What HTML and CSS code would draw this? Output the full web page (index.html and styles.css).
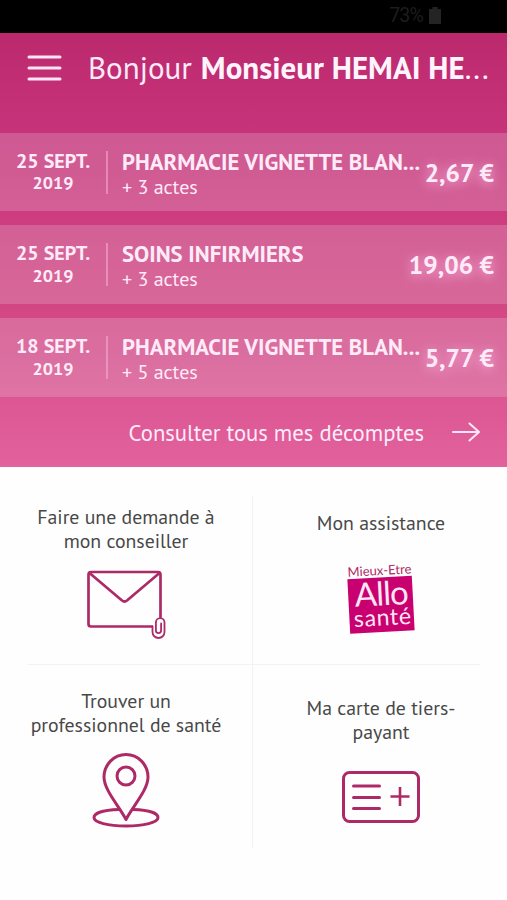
FILE: index.html
```html
<!DOCTYPE html>
<html lang="fr">
<head>
    <meta charset="UTF-8">
    <meta name="viewport" content="width=device-width, initial-scale=1.0">
    <title>Accueil</title>
    <link rel="stylesheet" href="styles.css">
</head>
<body>

<div class="status-bar">
    <span class="battery-level">73%</span>
    <svg class="battery-icon" width="12" height="17" viewBox="0 0 12 17"><path d="M3.5 0h5v2H12v15H0V2h3.5z" fill="#242424"/></svg>
</div>

<div class="hero">
    <div class="header">
        <svg class="menu-icon" width="36" height="28" viewBox="0 0 36 28" stroke="#ffe6f5" stroke-width="3" stroke-linecap="round">
            <path d="M2 3h31M2 14h31M2 25h31"/>
        </svg>
        <h1><span class="hello">Bonjour</span><span class="name">Monsieur HEMAI HE<span class="dots">...</span></span></h1>
    </div>

    <div class="refunds">
        <div class="refund">
            <div class="date">25 SEPT.<br><span class="year">2019</span></div>
            <div class="details">
                <div class="label">PHARMACIE VIGNETTE BLAN...</div>
                <div class="acts">+ 3 actes</div>
            </div>
            <div class="amount">2,67 €</div>
        </div>
        <div class="refund">
            <div class="date">25 SEPT.<br><span class="year">2019</span></div>
            <div class="details">
                <div class="label">SOINS INFIRMIERS</div>
                <div class="acts">+ 3 actes</div>
            </div>
            <div class="amount">19,06 €</div>
        </div>
        <div class="refund">
            <div class="date">18 SEPT.<br><span class="year">2019</span></div>
            <div class="details">
                <div class="label">PHARMACIE VIGNETTE BLAN...</div>
                <div class="acts">+ 5 actes</div>
            </div>
            <div class="amount">5,77 €</div>
        </div>
    </div>

    <a href="#" class="all-refunds">
        <span>Consulter tous mes décomptes</span>
        <svg width="28" height="20" viewBox="0 0 28 20" fill="none" stroke="#ffe6f5" stroke-width="2" stroke-linecap="round" stroke-linejoin="round">
            <path d="M1 10h26M17.500 1.500L27 10l-9.500 8.500"/>
        </svg>
    </a>
</div>

<div class="tiles">
    <a href="#" class="tile">
        <span class="tile-title">Faire une demande à<br>mon conseiller</span>
        <svg class="tile-icon" width="80" height="70" viewBox="0 0 80 70" fill="none" stroke="#ad2a67" stroke-width="2.700" stroke-linejoin="round" stroke-linecap="round">
            <path d="M66 57.500H5Q2.500 57.500 2.500 55V5.500Q2.500 3 5 3H72Q74.500 3 74.500 5.500V48"/>
            <path d="M3.500 4L36 31.500Q38.500 33.500 41 31.500L73.500 4"/>
            <path d="M66.500 57.500V63A6 6 0 0 0 78.500 63V53.500A4.300 4.300 0 0 0 69.900 53.500V61.500A2.600 2.600 0 0 0 75.100 61.500V54.500" stroke-width="1.800"/>
        </svg>
    </a>
    <a href="#" class="tile">
        <span class="tile-title single">Mon assistance</span>
        <svg class="tile-icon logo" width="76" height="80" viewBox="0 -4 76 80">
            <g transform="rotate(-3 38 38)">
                <text class="logo-top" x="6" y="13" textLength="64">Mieux-Etre</text>
                <path d="M5.500 15.500H70V70H5.500z" fill="#c90070"/>
                <text class="logo-big" x="12" y="43.500" textLength="54">Allo</text>
                <text class="logo-small" x="10" y="63.500" textLength="57">santé</text>
            </g>
        </svg>
    </a>
    <a href="#" class="tile">
        <span class="tile-title">Trouver un<br>professionnel de santé</span>
        <svg class="tile-icon" width="70" height="76" viewBox="0 0 70 76" fill="none" stroke="#ad2a67" stroke-width="3">
            <path d="M28 57.500C12 58 3 61 3 65.500C3 70.500 17 74 35 74S67 70.500 67 65.500C67 61 58 58 42 57.500"/>
            <path d="M35 67.500C28 54 13 38 13 25A22 22.500 0 0 1 57 25C57 38 42 54 35 67.500z" stroke-linejoin="round"/>
            <circle cx="35" cy="24" r="9"/>
        </svg>
    </a>
    <a href="#" class="tile">
        <span class="tile-title low">Ma carte de tiers-<br>payant</span>
        <svg class="tile-icon card-icon" width="80" height="54" viewBox="0 0 80 54" fill="none" stroke="#ad2a67" stroke-width="3" stroke-linecap="round">
            <rect x="2.500" y="2.500" width="75" height="49" rx="6"/>
            <path d="M12.500 16h26M12.500 27.500h26M12.500 38.500h26"/>
            <path d="M49.500 26.500h19M59 17v19" stroke-width="2.600" stroke-linecap="butt"/>
        </svg>
    </a>
</div>

</body>
</html>
```
FILE: styles.css
```css
* {
    box-sizing: border-box;
}
body {
    margin: 0;
    width: 507px;
    height: 900px;
    background-color: #fefefe;
    font-family: "PT Sans", "Noto Sans", sans-serif;
    overflow: hidden;
}
a {
    color: inherit;
    text-decoration: none;
}

/* Status bar */
.status-bar {
    height: 33px;
    padding: 0 66px 2px 0;
    background-color: #000;
    color: #1d1d1d;
    display: flex;
    justify-content: flex-end;
    align-items: center;
    gap: 6px;
}
.battery-level {
    font-family: Roboto, sans-serif;
    font-size: 19.500px;
    line-height: 22px;
    padding-top: 1px;
    letter-spacing: -0.8px;
}

/* Header and refunds */
.hero {
    height: 434px;
    background: linear-gradient(#bb296d, #c8347b 24%, #d24482 60%, #e2629d);
    color: #ffebf8;
}
.header {
    height: 99.700px;
    padding: 20px 0 0 27px;
    display: flex;
    align-items: flex-start;
}
.menu-icon {
    margin: 1px 25px 0 0;
}
h1 {
    margin: 0;
    font-size: 31px;
    line-height: 30px;
    font-weight: normal;
    white-space: nowrap;
}
.name {
    margin-left: 9px;
    font-weight: bold;
    color: #fff4fc;
}
.dots {
    font-weight: normal;
}
.refunds {
    display: flex;
    flex-direction: column;
    gap: 14px;
}
.refund {
    height: 78.700px;
    padding: 18px 13px 18px 0;
    background-color: rgba(230, 225, 230, 0.22);
    display: flex;
}
.date {
    width: 108px;
    height: 43px;
    border-right: 2px solid rgba(255, 180, 220, 0.5);
    font-size: 20px;
    line-height: 21.500px;
    font-weight: bold;
    text-align: center;
    white-space: nowrap;
}
.year {
    font-size: 18px;
}
.details {
    margin-left: 14px;
    white-space: nowrap;
    flex: 1;
    min-width: 0;
}
.label {
    font-size: 22.700px;
    line-height: 21px;
    font-weight: bold;
}
.acts {
    font-size: 20px;
    line-height: 31px;
}
.amount {
    font-size: 25.500px;
    line-height: 43px;
    font-weight: bold;
    white-space: nowrap;
    text-shadow: 0 2px 12px #ffb5e2;
}
.all-refunds {
    height: 71px;
    padding-right: 27px;
    display: flex;
    align-items: center;
    justify-content: flex-end;
    gap: 28px;
    font-size: 22.700px;
}

/* Shortcuts */
.tiles {
    margin-top: 29px;
    display: grid;
    grid-template-columns: 252px 258px;
    grid-template-rows: 169px 183px;
    background:
        linear-gradient(#f3f3f3, #f3f3f3) 252px 0 / 1px 100% no-repeat,
        linear-gradient(#f3f3f3, #f3f3f3) 28px 168px / 452px 1px no-repeat;
}
.tile {
    padding-top: 9px;
    display: flex;
    flex-direction: column;
    align-items: center;
    color: #484848;
    white-space: nowrap;
}
.tile:nth-child(n+3) {
    padding-top: 24px;
}
.tile-title {
    height: 47px;
    font-size: 19.800px;
    line-height: 23.500px;
    text-align: center;
}
.single {
    margin-top: 6px;
    height: 41px;
}
.low {
    margin-top: 7px;
}
.tile-icon {
    margin-top: 17px;
}
.tile:nth-child(3) .tile-icon {
    margin-top: 16px;
}
.logo {
    margin-top: 6px;
}
.card-icon {
    margin-top: 27px;
}
.logo-top {
    font: 13px Lato, sans-serif;
    fill: #ad2a67;
}
.logo-big {
    font: 33px Lato, sans-serif;
    fill: #ffe6f5;
}
.logo-small {
    font: 23px Lato, sans-serif;
    fill: #ffe6f5;
}
```
